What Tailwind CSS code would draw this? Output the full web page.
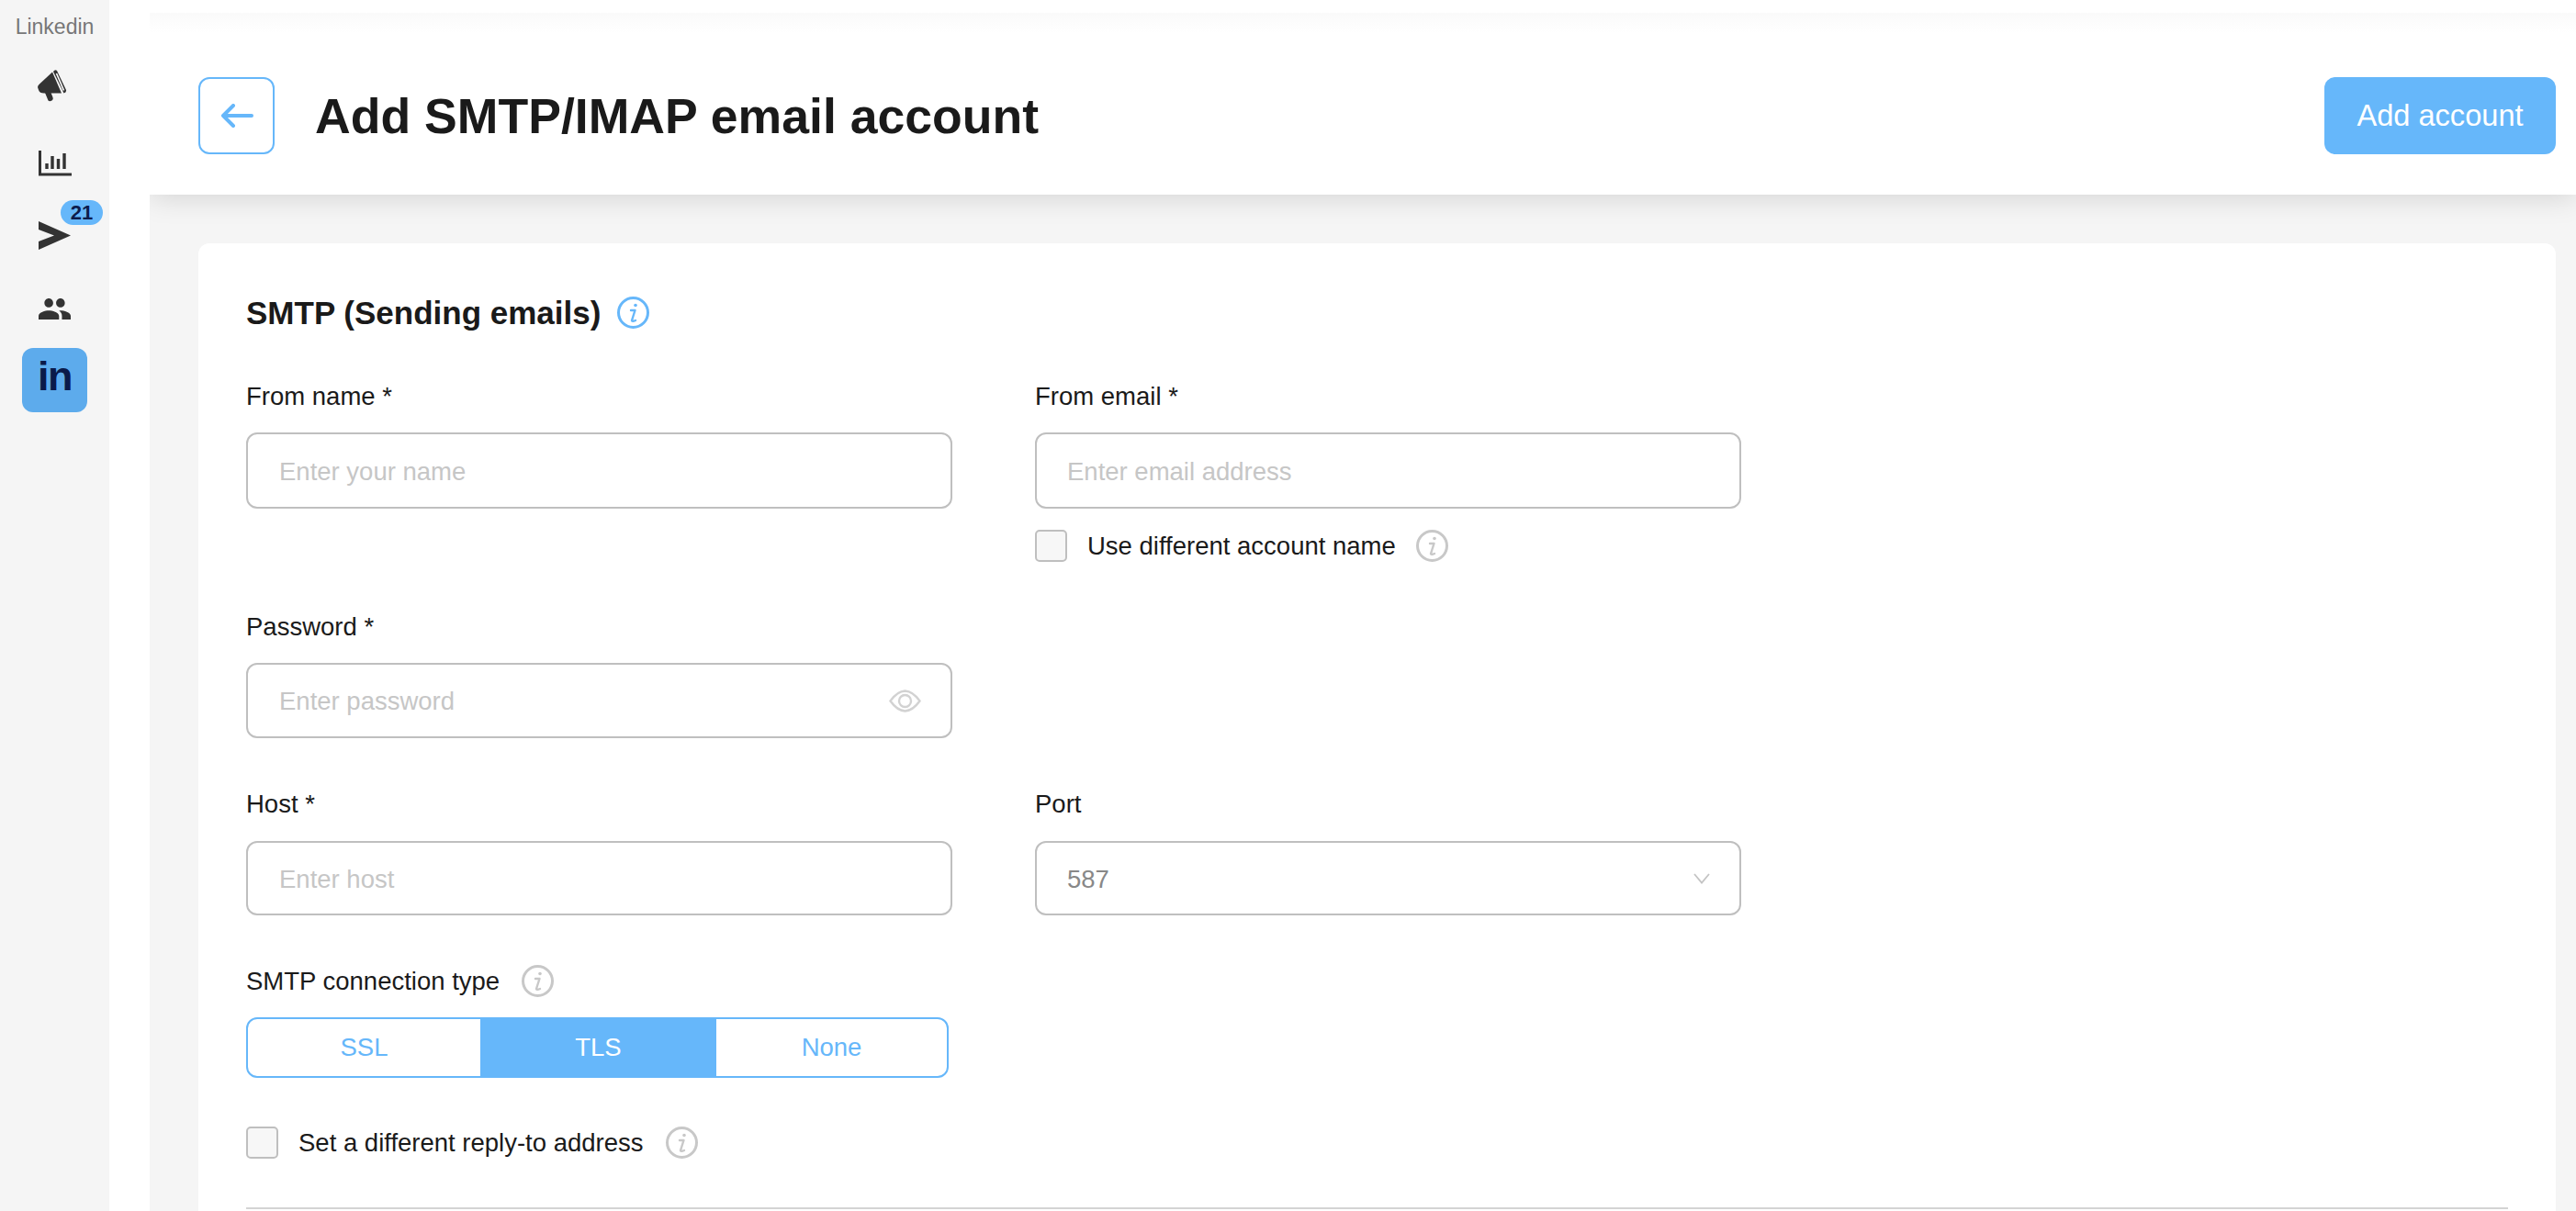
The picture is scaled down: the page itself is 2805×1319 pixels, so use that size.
<!DOCTYPE html>
<html lang="en">
<head>
    <meta charset="UTF-8">
    <title>Add SMTP/IMAP email account</title>
    <script src="https://cdn.jsdelivr.net/npm/@tailwindcss/browser@4"></script>
</head>
<body class="bg-white h-screen overflow-hidden flex font-['Liberation_Sans',Arial,sans-serif] text-[27.5px] text-[#1a1a1a]">
    <!-- sidebar -->
    <aside class="w-[119px] shrink-0 bg-[#f5f5f5] flex flex-col items-center">
        <div class="mt-[16px] h-[26px] leading-[26px] text-[23px] text-[#777777]">Linkedin</div>
        <a class="mt-[34px] ml-[-5px]">
            <svg class="block w-[32px] h-[35px]" viewBox="0 0 32 35" fill="#333333">
                <path d="M0 19 Q0 17 2 15.5 L16 2.5 L26 25.5 L7 25.5 Q2 25.5 1 22 Z"/>
                <path d="M8 25 L11.5 33.5 Q13 35 15.5 33.5 Q17.5 32 16.5 30 L14.5 25 Z"/>
                <path d="M17 2 Q19 -1 21 1 L31 22 Q31.5 25 28.5 25.5 Z"/>
                <path d="M20.5 4 L28.5 22.5" stroke="#ffffff" stroke-width="1.6" fill="none"/>
            </svg>
        </a>
        <a class="mt-[53px]">
            <svg class="block w-[36px] h-[28px]" viewBox="0 0 36 28" fill="none" stroke="#333333">
                <path d="M1.5 0 V26 H36" stroke-width="3"/>
                <path d="M9 14 V20 M15 6 V20 M21.5 9 V20 M28 3 V20" stroke-width="3.4"/>
            </svg>
        </a>
        <a class="relative mt-[49px]">
            <svg class="block w-[35px] h-[31px]" viewBox="0 0 35 31" fill="#333333">
                <path d="M0 0 L35 15.5 L0 31 L0 22 L17 15.5 L0 9 Z"/>
            </svg>
            <span class="absolute left-[24px] top-[-23px] w-[46px] h-[27px] rounded-full bg-[#66b7fa] text-[#0c1c4d] text-[22px] font-bold leading-[27px] text-center">21</span>
        </a>
        <a class="mt-[53px]">
            <svg class="block w-[35px] h-[23px]" viewBox="1 5 22 14" preserveAspectRatio="none" fill="#333333">
                <path d="M16 11c1.66 0 2.99-1.34 2.99-3S17.66 5 16 5c-1.66 0-3 1.34-3 3s1.34 3 3 3zm-8 0c1.66 0 2.99-1.34 2.99-3S9.66 5 8 5C6.34 5 5 6.34 5 8s1.34 3 3 3zm0 2c-2.33 0-7 1.17-7 3.5V19h14v-2.5c0-2.33-4.67-3.5-7-3.5zm8 0c-.29 0-.62.02-.97.05 1.16.84 1.97 1.97 1.97 3.45V19h6v-2.5c0-2.33-4.67-3.5-7-3.5z"/>
            </svg>
        </a>
        <a class="mt-[31px] w-[71px] h-[70px] rounded-[12px] bg-[#5dabec] flex items-center justify-center">
            <span class="text-[45px] leading-[70px] font-bold text-[#0a1a4a] tracking-[-1.5px] mt-[-9px]">in</span>
        </a>
    </aside>

    <div class="flex-1 min-w-0 flex">
        <!-- white strip left of the content -->
        <div class="w-[44px] shrink-0 bg-white relative z-20"></div>

        <main class="flex-1 min-w-0 bg-[#f5f5f5] flex flex-col">
            <header class="relative z-10 h-[212px] shrink-0 bg-white shadow-[0_2px_30px_rgba(0,0,0,0.15)] flex flex-col">
                <div class="ml-[-44px] mt-[14px] h-[22px] bg-gradient-to-b from-[#fafafa] to-white"></div>
                <div class="mt-[48px] pl-[53px] pr-[22px] flex items-center">
                    <button class="w-[83px] h-[84px] rounded-[12px] border-2 border-[#66b7fa] flex items-center justify-center">
                        <svg class="w-[36px] h-[26px]" viewBox="0 0 36 26" fill="none" stroke="#66b7fa" stroke-width="4" stroke-linecap="round" stroke-linejoin="round">
                            <path d="M34 13 H3 M14 2 L3 13 L14 24"/>
                        </svg>
                    </button>
                    <h1 class="ml-[44px] text-[53.6px] leading-[60px] font-bold">Add SMTP/IMAP email account</h1>
                    <button class="ml-auto w-[252px] h-[84px] rounded-[12px] bg-[#66b7fa] text-white text-[32.6px]">Add account</button>
                </div>
            </header>

            <div class="pt-[53px] pl-[53px] pr-[22px]">
                <section class="bg-white rounded-t-[12px] pt-[58px] pl-[52px] pr-[52px] pb-[40px]">
                    <div class="flex items-center h-[35px]">
                        <h2 class="text-[35px] font-bold leading-[35px]">SMTP (Sending emails)</h2>
                        <svg class="ml-[18px] w-[35px] h-[35px]" viewBox="0 0 35 35" fill="none" stroke="#66b7fa">
                            <circle cx="17.5" cy="17.5" r="16" stroke-width="3"/>
                            <path d="M15 15 H19.5 L16 26 Q16.5 27.5 20 26" stroke-width="2.4" stroke-linecap="round" stroke-linejoin="round"/>
                            <circle cx="20" cy="9.5" r="1.8" fill="#66b7fa" stroke="none"/>
                        </svg>
                    </div>

                    <div class="mt-[59px] grid grid-cols-[769px_769px] gap-x-[90px]">
                        <div>
                            <label class="block h-[30px] leading-[30px]">From name *</label>
                            <input class="mt-[24px] block w-full h-[83px] pl-[34px] rounded-[12px] border-2 border-[#bfbfbf] placeholder:text-[#c6c6c6] outline-none pt-[2px]" placeholder="Enter your name">
                        </div>
                        <div>
                            <label class="block h-[30px] leading-[30px]">From email *</label>
                            <input class="mt-[24px] block w-full h-[83px] pl-[33px] rounded-[12px] border-2 border-[#bfbfbf] placeholder:text-[#c6c6c6] outline-none pt-[2px]" placeholder="Enter email address">
                            <div class="mt-[23px] flex items-center h-[35px]">
                                <span class="w-[35px] h-[35px] rounded-[5px] border-2 border-[#bfbfbf] bg-[#f7f7f7]"></span>
                                <span class="ml-[22px]">Use different account name</span>
                                <svg class="ml-[22px] w-[35px] h-[35px]" viewBox="0 0 35 35" fill="none" stroke="#c8c8c8">
                                    <circle cx="17.5" cy="17.5" r="16" stroke-width="3"/>
                                    <path d="M15 15 H19.5 L16 26 Q16.5 27.5 20 26" stroke-width="2.4" stroke-linecap="round" stroke-linejoin="round"/>
                                    <circle cx="20" cy="9.5" r="1.8" fill="#c8c8c8" stroke="none"/>
                                </svg>
                            </div>
                        </div>

                        <div class="mt-[56px]">
                            <label class="block h-[30px] leading-[30px]">Password *</label>
                            <div class="mt-[24px] flex items-center h-[82px] pl-[34px] pr-[32px] rounded-[12px] border-2 border-[#bfbfbf]">
                                <input class="flex-1 min-w-0 placeholder:text-[#c6c6c6] outline-none pt-[2px]" placeholder="Enter password">
                                <svg class="w-[35px] h-[25px]" viewBox="0 0 35 25" fill="none" stroke="#d2d2d2" stroke-width="2.4">
                                    <path d="M1.5 12.5 Q9 2 17.5 1.5 Q26 2 33.5 12.5 Q26 23 17.5 23.5 Q9 23 1.5 12.5 Z"/>
                                    <circle cx="17.5" cy="12.5" r="6.5"/>
                                </svg>
                            </div>
                        </div>
                        <div></div>

                        <div class="mt-[57px]">
                            <label class="block h-[30px] leading-[30px]">Host *</label>
                            <input class="mt-[25px] block w-full h-[81px] pl-[34px] rounded-[12px] border-2 border-[#bfbfbf] placeholder:text-[#c6c6c6] outline-none pt-[2px]" placeholder="Enter host">
                        </div>
                        <div class="mt-[57px]">
                            <label class="block h-[30px] leading-[30px]">Port</label>
                            <div class="mt-[25px] flex items-center justify-between h-[81px] pl-[33px] pr-[32px] rounded-[12px] border-2 border-[#bfbfbf] text-[#888888]">
                                <span class="pt-[2px]">587</span>
                                <svg class="w-[18px] h-[12px]" viewBox="0 0 18 12" fill="none" stroke="#c4c4c4" stroke-width="1.8">
                                    <path d="M1 1 L9 10.5 L17 1"/>
                                </svg>
                            </div>
                        </div>
                    </div>

                    <div class="mt-[54px] flex items-center h-[35px]">
                        <span>SMTP connection type</span>
                        <svg class="ml-[24px] w-[35px] h-[35px]" viewBox="0 0 35 35" fill="none" stroke="#c8c8c8">
                            <circle cx="17.5" cy="17.5" r="16" stroke-width="3"/>
                            <path d="M15 15 H19.5 L16 26 Q16.5 27.5 20 26" stroke-width="2.4" stroke-linecap="round" stroke-linejoin="round"/>
                            <circle cx="20" cy="9.5" r="1.8" fill="#c8c8c8" stroke="none"/>
                        </svg>
                    </div>
                    <div class="mt-[22px] w-[765px] h-[66px] rounded-[12px] border-2 border-[#66b7fa] flex overflow-hidden">
                        <button class="w-[253px] text-[#66b7fa]">SSL</button>
                        <button class="w-[257px] bg-[#66b7fa] text-white">TLS</button>
                        <button class="flex-1 text-[#66b7fa]">None</button>
                    </div>

                    <div class="mt-[53px] flex items-center h-[35px]">
                        <span class="w-[35px] h-[35px] rounded-[5px] border-2 border-[#bfbfbf] bg-[#f7f7f7]"></span>
                        <span class="ml-[22px]">Set a different reply-to address</span>
                        <svg class="ml-[24px] w-[35px] h-[35px]" viewBox="0 0 35 35" fill="none" stroke="#c8c8c8">
                            <circle cx="17.5" cy="17.5" r="16" stroke-width="3"/>
                            <path d="M15 15 H19.5 L16 26 Q16.5 27.5 20 26" stroke-width="2.4" stroke-linecap="round" stroke-linejoin="round"/>
                            <circle cx="20" cy="9.5" r="1.8" fill="#c8c8c8" stroke="none"/>
                        </svg>
                    </div>
                    <div class="mt-[53px] h-[2px] bg-[#d4d4d4]"></div>
                </section>
            </div>
        </main>
    </div>
</body>
</html>
